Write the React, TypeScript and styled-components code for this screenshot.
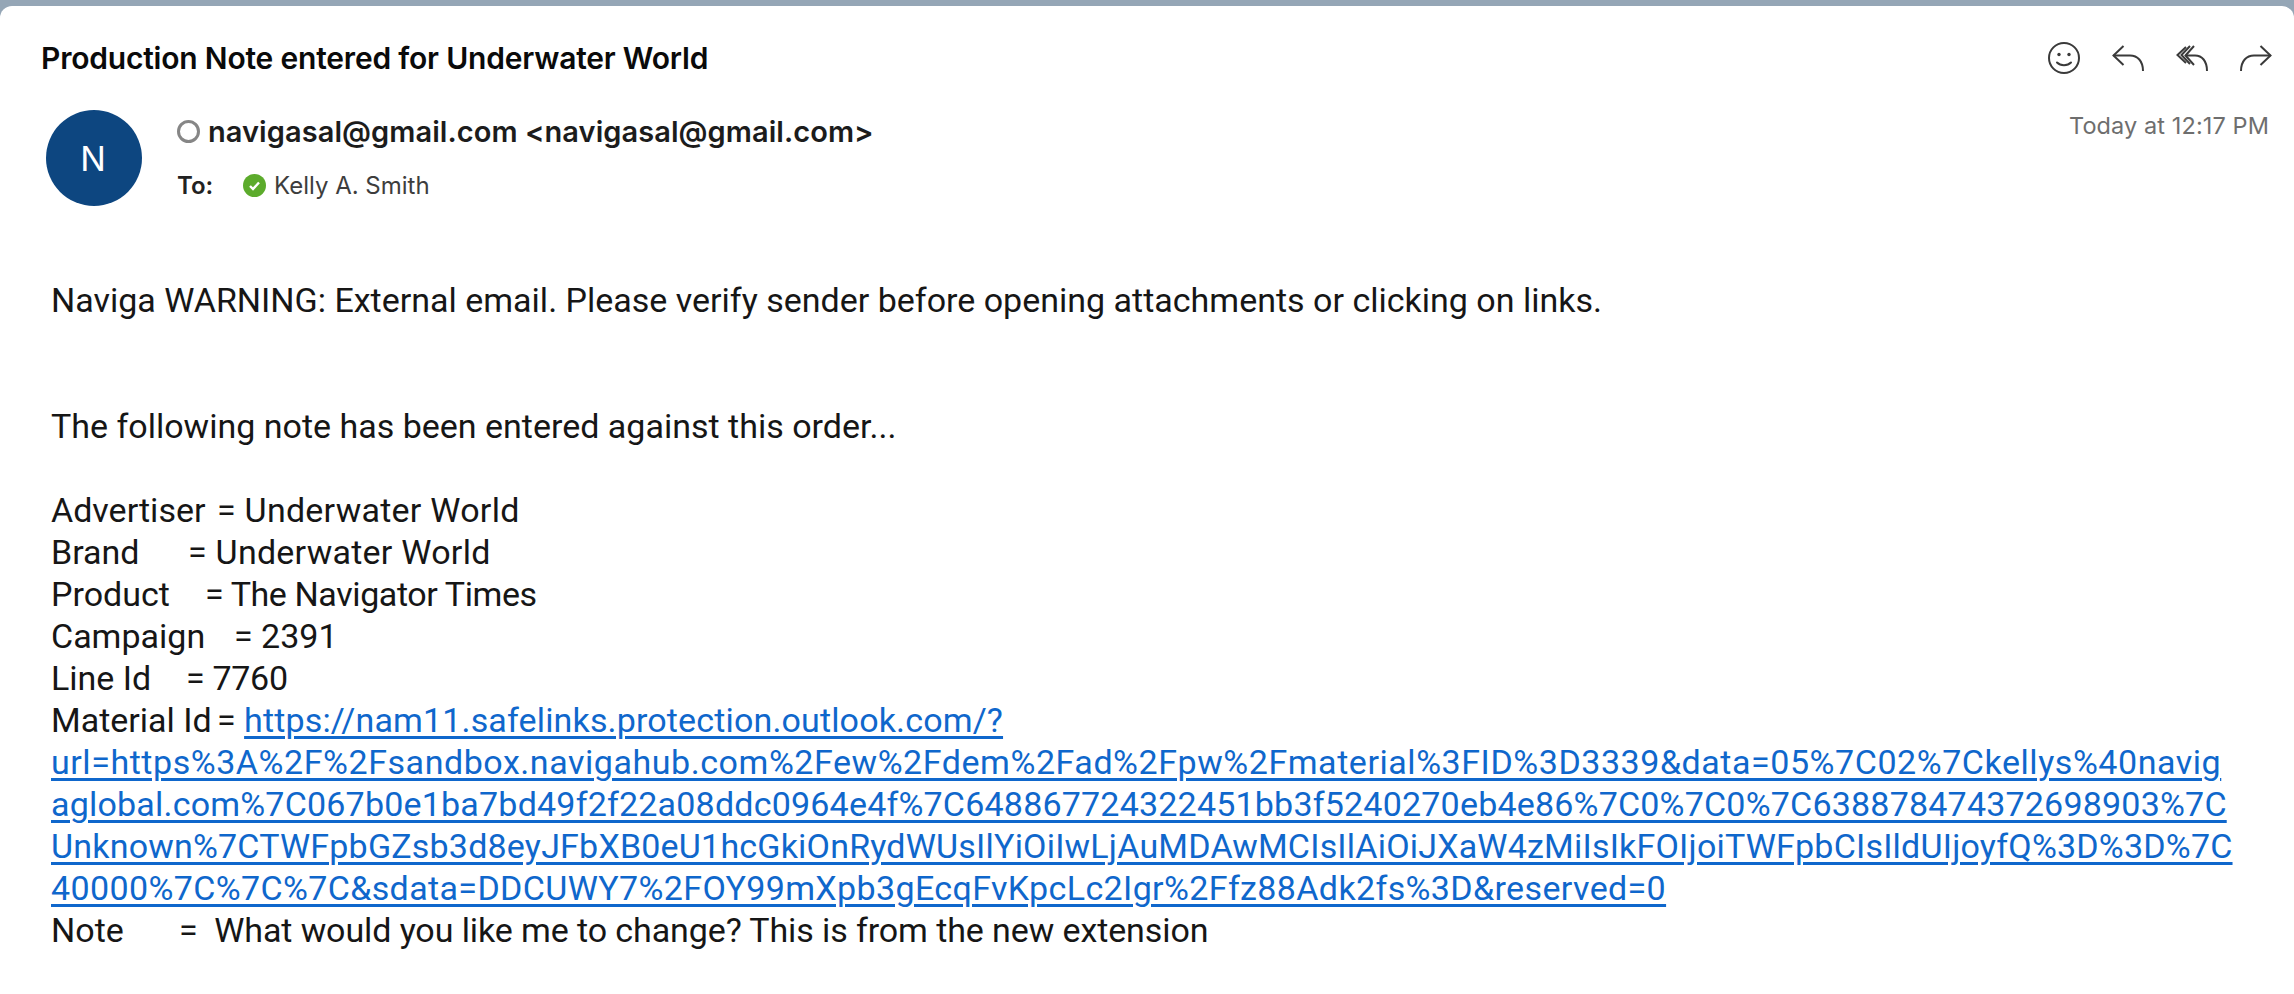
import React from 'react';
import styled, { createGlobalStyle } from 'styled-components';

const GlobalStyle = createGlobalStyle`
  html, body {
    margin: 0;
    padding: 0;
    background: #94a5b5;
    overflow: hidden;
  }
`;

const Window = styled.main`
  width: 2294px;
  height: 994px;
  padding-top: 6px;
  box-sizing: border-box;
  background: #95a6b6;
`;

const Card = styled.div`
  height: 988px;
  box-sizing: border-box;
  background: #fff;
  border-radius: 12px 12px 0 0;
  padding: 30px 22px 0 41px;
  font-family: Inter, 'Liberation Sans', sans-serif;
`;

const TitleRow = styled.header`
  display: flex;
  justify-content: space-between;
  align-items: center;
  height: 44px;
`;

const Title = styled.h1`
  margin: 0;
  font-size: 30px;
  font-weight: 600;
  letter-spacing: -0.2px;
  color: #0a0a0a;
`;

const Actions = styled.div`
  display: flex;
  align-items: center;
  gap: 32px;
  color: #3a3a3a;
`;

const SenderRow = styled.section`
  display: flex;
  margin-top: 30px;
  margin-left: 5px;
`;

const Avatar = styled.div`
  width: 96px;
  height: 96px;
  flex: none;
  border-radius: 50%;
  background: #0d4680;
  color: #fff;
  font-size: 34px;
  padding-right: 2px;
  box-sizing: border-box;
  display: flex;
  align-items: center;
  justify-content: center;
`;

const SenderInfo = styled.div`
  flex: 1;
  margin-left: 35px;
  padding-top: 3px;
`;

const FromLine = styled.div`
  display: flex;
  align-items: center;
  justify-content: space-between;
  height: 36px;
  padding-right: 3px;
`;

const FromName = styled.div`
  display: flex;
  align-items: center;
  gap: 8px;
  font-size: 29px;
  font-weight: 600;
  letter-spacing: 0.06px;
  color: #1c1c1c;
`;

const StatusRing = styled.span`
  width: 23px;
  height: 23px;
  box-sizing: border-box;
  border: 3px solid #868686;
  border-radius: 50%;
`;

const Timestamp = styled.span`
  font-size: 23.5px;
  color: #6e6e6e;
  letter-spacing: 0.1px;
  margin-bottom: 12px;
`;

const ToLine = styled.div`
  display: flex;
  align-items: center;
  height: 36px;
  margin-top: 18px;
  font-size: 24px;
`;

const ToLabel = styled.span`
  width: 66px;
  font-weight: 600;
  color: #222;
`;

const Recipient = styled.span`
  display: flex;
  align-items: center;
  gap: 8px;
  color: #3d3d3d;
`;

const Body = styled.article`
  margin-top: 73px;
  margin-left: 10px;
  font-family: Roboto, 'Liberation Sans', sans-serif;
  font-size: 34px;
  line-height: 42px;
  color: #161616;
  white-space: pre;
`;

const Paragraph = styled.p<{ $gap?: number }>`
  margin: 0 0 ${(p) => p.$gap ?? 0}px;
`;

const FieldRow = styled.div`
  display: flex;
`;

const FieldLabel = styled.span<{ $width: number }>`
  width: ${(p) => p.$width}px;
  flex: none;
`;

const FieldValue = styled.span<{ $track?: number }>`
  letter-spacing: ${(p) => p.$track ?? 0}px;
`;

const Link = styled.a<{ $track: number }>`
  color: #0f67cc;
  letter-spacing: ${(p) => p.$track}px;
  text-decoration: underline;
  text-decoration-thickness: 3px;
  text-underline-offset: 4px;
`;

const SmileIcon = () => (
  <svg width="32" height="32" viewBox="0 0 32 32" fill="none" stroke="currentColor" strokeWidth="2" strokeLinecap="round">
    <circle cx="16" cy="16" r="15" />
    <circle cx="11" cy="12.500" r="1.700" fill="currentColor" stroke="none" />
    <circle cx="21" cy="12.500" r="1.700" fill="currentColor" stroke="none" />
    <path d="M9 20.500c3.500 3.500 10.500 3.500 14 0" />
  </svg>
);

const ReplyIcon = () => (
  <svg width="32" height="26" viewBox="0 0 32 26" fill="none" stroke="currentColor" strokeWidth="2">
    <path d="M11.500 1 1.500 10.500 11.500 20" />
    <path d="M1.500 10.500H18c7.500 0 13 5.500 13 15.500" />
  </svg>
);

const ReplyAllIcon = () => (
  <svg width="32" height="26" viewBox="0 0 32 26" fill="none" stroke="currentColor" strokeWidth="2">
    <path d="M10 2 1.500 10 10 18" />
    <path d="M14 1 5.500 10 14 19" />
    <path d="M18 1 9.500 10.500 18 20" />
    <path d="M9.500 10.500H19c7 0 12 5.500 12 15.500" />
  </svg>
);

const ForwardIcon = () => (
  <svg width="32" height="26" viewBox="0 0 32 26" fill="none" stroke="currentColor" strokeWidth="2">
    <path d="M20.500 1 30.500 10.500 20.500 20" />
    <path d="M30.500 10.500H14C6.500 10.500 1 16 1 26" />
  </svg>
);

const CheckBadge = () => (
  <svg width="23" height="23" viewBox="0 0 23 23">
    <circle cx="11.500" cy="11.500" r="11.500" fill="#5cab2c" />
    <path d="M7 12l3 3 6-6.500" fill="none" stroke="#fff" strokeWidth="2.400" />
  </svg>
);

const fields = [
  { label: 'Advertiser', width: 166, value: '= Underwater World', track: 0.25 },
  { label: 'Brand', width: 137, value: '= Underwater World', track: 0.25 },
  { label: 'Product', width: 154, value: '= The Navigator Times', track: -0.4 },
  { label: 'Campaign', width: 183, value: '= 2391', track: 0 },
  { label: 'Line Id', width: 135, value: '= 7760', track: -0.3 },
];

const linkLines = [
  { text: 'url=https%3A%2F%2Fsandbox.navigahub.com%2Few%2Fdem%2Fad%2Fpw%2Fmaterial%3FID%3D3339&data=05%7C02%7Ckellys%40navig', track: 0.55 },
  { text: 'aglobal.com%7C067b0e1ba7bd49f2f22a08ddc0964e4f%7C648867724322451bb3f5240270eb4e86%7C0%7C0%7C638878474372698903%7C', track: 0.2 },
  { text: 'Unknown%7CTWFpbGZsb3d8eyJFbXB0eU1hcGkiOnRydWUsIlYiOiIwLjAuMDAwMCIsIlAiOiJXaW4zMiIsIkFOIjoiTWFpbCIsIldUIjoyfQ%3D%3D%7C', track: 0.2 },
  { text: '40000%7C%7C%7C&sdata=DDCUWY7%2FOY99mXpb3gEcqFvKpcLc2Igr%2Ffz88Adk2fs%3D&reserved=0', track: 0.37 },
];

export default function App() {
  return (
    <Window>
      <GlobalStyle />
      <Card>
        <TitleRow>
          <Title>Production Note entered for Underwater World</Title>
          <Actions>
            <SmileIcon />
            <ReplyIcon />
            <ReplyAllIcon />
            <ForwardIcon />
          </Actions>
        </TitleRow>
        <SenderRow>
          <Avatar>N</Avatar>
          <SenderInfo>
            <FromLine>
              <FromName>
                <StatusRing />
                navigasal@gmail.com &lt;navigasal@gmail.com&gt;
              </FromName>
              <Timestamp>Today at 12:17 PM</Timestamp>
            </FromLine>
            <ToLine>
              <ToLabel>To:</ToLabel>
              <Recipient>
                <CheckBadge />
                Kelly A. Smith
              </Recipient>
            </ToLine>
          </SenderInfo>
        </SenderRow>
        <Body>
          <Paragraph $gap={84}>Naviga WARNING: External email. Please verify sender before opening attachments or clicking on links.</Paragraph>
          <Paragraph $gap={42}>The following note has been entered against this order...</Paragraph>
          {fields.map((field) => (
            <FieldRow key={field.label}>
              <FieldLabel $width={field.width}>{field.label}</FieldLabel>
              <FieldValue $track={field.track}>{field.value}</FieldValue>
            </FieldRow>
          ))}
          <FieldRow>
            <FieldLabel $width={166}>Material Id</FieldLabel>
            <FieldValue>
              {'= '}
              <Link href="#" $track={0.15}>https://nam11.safelinks.protection.outlook.com/?</Link>
            </FieldValue>
          </FieldRow>
          {linkLines.map((line) => (
            <Paragraph key={line.text}>
              <Link href="#" $track={line.track}>{line.text}</Link>
            </Paragraph>
          ))}
          <FieldRow>
            <FieldLabel $width={128}>Note</FieldLabel>
            <FieldValue $track={-0.1}>{'=  What would you like me to change? This is from the new extension'}</FieldValue>
          </FieldRow>
        </Body>
      </Card>
    </Window>
  );
}
